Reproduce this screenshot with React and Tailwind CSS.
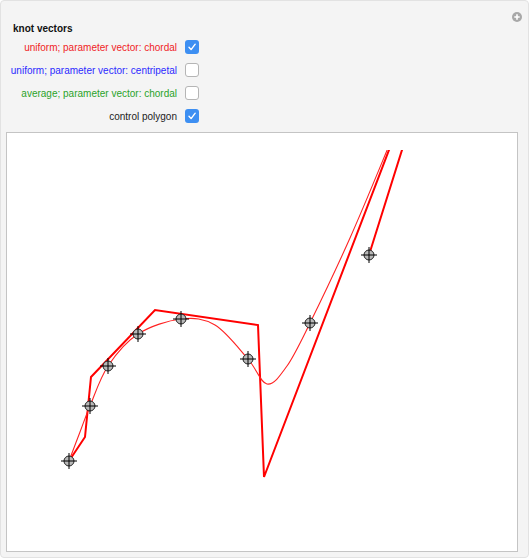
import React from 'react';

const controlPoints = [
  [69, 461], [90, 406], [108, 366], [138, 334],
  [181, 319], [248, 359], [310, 323], [369, 255],
];

const polygon = [
  [69, 461], [85, 437], [91, 377], [155, 310], [258, 325],
  [264, 477], [462, -41], [369, 255],
];

const curvePoints = [
  [69, 461], [80, 432], [90, 406], [108, 366], [138, 334], [181, 319],
  [215, 325], [248, 359], [267, 384], [287, 366], [310, 323], [350, 238],
  [388, 148], [396, 128],
];

// catmull-rom through the points, as cubic beziers
const smoothPath = (pts) => {
  let d = `M${pts[0][0]},${pts[0][1]}`;
  for (let i = 0; i < pts.length - 1; i++) {
    const p0 = pts[i - 1] || pts[i];
    const p1 = pts[i];
    const p2 = pts[i + 1];
    const p3 = pts[i + 2] || p2;
    const c1 = [p1[0] + (p2[0] - p0[0]) / 6, p1[1] + (p2[1] - p0[1]) / 6];
    const c2 = [p2[0] - (p3[0] - p1[0]) / 6, p2[1] - (p3[1] - p1[1]) / 6];
    d += ` C${c1[0]},${c1[1]} ${c2[0]},${c2[1]} ${p2[0]},${p2[1]}`;
  }
  return d;
};

const Checkbox = ({ checked }) =>
  checked ? (
    <div className="w-[14px] h-[14px] rounded-[3px] bg-[#3d8ff2] flex items-center justify-center">
      <svg width="10" height="10" viewBox="0 0 10 10">
        <path d="M2 5.3 L4.1 7.6 L8.2 2.2" fill="none" stroke="white" strokeWidth="1.4" strokeLinecap="round" strokeLinejoin="round" />
      </svg>
    </div>
  ) : (
    <div className="w-[14px] h-[14px] rounded-[3px] bg-white border border-[#b5b5b5]" />
  );

const rows = [
  { label: 'uniform; parameter vector: chordal', color: 'text-[#f0241f]', checked: true },
  { label: 'uniform; parameter vector: centripetal', color: 'text-[#2b2bff]', checked: false },
  { label: 'average; parameter vector: chordal', color: 'text-[#2aa32a]', checked: false },
  { label: 'control polygon', color: 'text-[#222]', checked: true },
];

const Marker = ({ x, y }) => (
  <g>
    <circle cx={x} cy={y} r="5" fill="#b9b9b9" stroke="#222" strokeWidth="1" />
    <line x1={x - 8} y1={y} x2={x + 8} y2={y} stroke="#000" strokeWidth="1" />
    <line x1={x} y1={y - 8} x2={x} y2={y + 8} stroke="#000" strokeWidth="1" />
  </g>
);

export default function App() {
  return (
    <div className="w-[530px] h-[560px] bg-white" style={{ fontFamily: '"Liberation Sans", Arial, sans-serif' }}>
      <div className="relative w-[529px] h-[558px] bg-[#f4f4f4] border border-[#e2e2e2] rounded-[4px] pt-[21px] px-[5px]">
        <svg className="absolute right-[6px] top-[11px]" width="10" height="10" viewBox="0 0 10 10">
          <circle cx="5" cy="5" r="5" fill="#a8a8a8" />
          <path d="M5 2.3 V7.7 M2.3 5 H7.7" stroke="white" strokeWidth="1.6" />
        </svg>
        <div className="pl-[7px] text-[10px] font-bold text-[#111] leading-[13px]">knot vectors</div>
        <div className="flex flex-col gap-[9px] mt-[5px] w-[193px]">
          {rows.map((r) => (
            <div key={r.label} className="flex items-center justify-end gap-[8px] h-[14px]">
              <span className={`text-[10px] ${r.color}`}>{r.label}</span>
              <Checkbox checked={r.checked} />
            </div>
          ))}
        </div>
        <div className="mt-[9px] w-[512px] h-[420px] bg-white border border-[#c4c4c4]">
          <svg width="510" height="418" viewBox="7 133 510 418">
            <defs>
              <clipPath id="plotclip">
                <rect x="0" y="150" width="600" height="420" />
              </clipPath>
            </defs>
            <g clipPath="url(#plotclip)">
              <polyline
                points={polygon.map((p) => p.join(',')).join(' ')}
                fill="none"
                stroke="#f00"
                strokeWidth="2"
                strokeLinejoin="miter"
              />
              <path d={smoothPath(curvePoints)} fill="none" stroke="#f22" strokeWidth="1.1" />
            </g>
            {controlPoints.map(([x, y]) => (
              <Marker key={`${x}-${y}`} x={x} y={y} />
            ))}
          </svg>
        </div>
      </div>
    </div>
  );
}
